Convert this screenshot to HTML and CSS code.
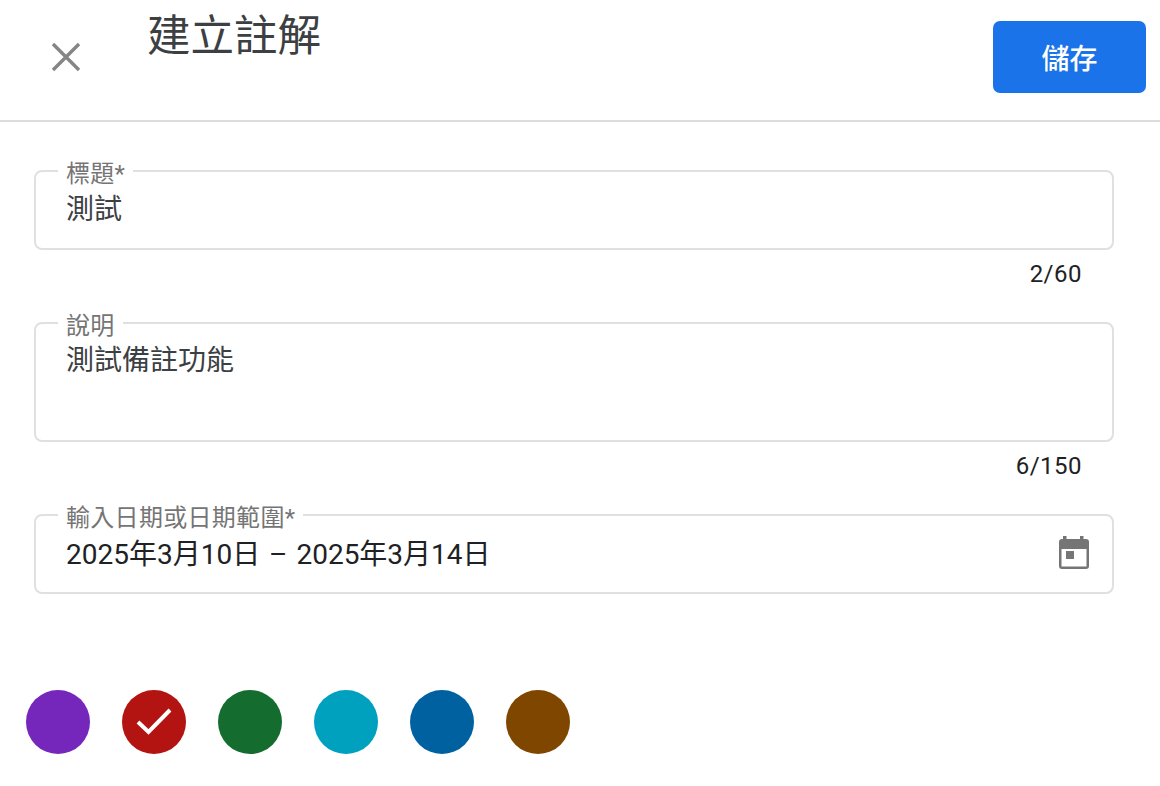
FILE: index.html
```html
<!DOCTYPE html>
<html lang="zh-TW">
<head>
    <meta charset="UTF-8">
    <meta name="viewport" content="width=device-width, initial-scale=1.0">
    <title>建立註解</title>
    <link rel="stylesheet" href="styles.css">
</head>
<body>
    <div class="dialog-header">
        <button class="close-btn" aria-label="關閉">
            <svg viewBox="0 0 30 30" width="30" height="30"><path d="M2 2L28 28M28 2L2 28" fill="none" stroke="#858585" stroke-width="3.4"/></svg>
        </button>
        <h1 class="dialog-title">建立註解</h1>
        <button class="save-btn">儲存</button>
    </div>
    <div class="dialog-body">
        <fieldset class="field field-title">
            <legend>標題*</legend>
            <div class="field-value">測試</div>
        </fieldset>
        <div class="field-count">2/60</div>
        <fieldset class="field field-desc">
            <legend>說明</legend>
            <div class="field-value">測試備註功能</div>
        </fieldset>
        <div class="field-count">6/150</div>
        <fieldset class="field field-date">
            <legend>輸入日期或日期範圍*</legend>
            <div class="field-value">2025年3月10日 – 2025年3月14日</div>
            <svg class="calendar-icon" viewBox="0 0 30 33" width="30" height="33"><path fill-rule="evenodd" fill="#757575" d="M4 0h3.500v3h13.500V0h3.500v3h2.500A3 3 0 0 1 30 6V30A3 3 0 0 1 27 33H3A3 3 0 0 1 0 30V6A3 3 0 0 1 3 3H4zM2.500 13V30.500H27.500V13zM7 15h8v8H7z"/></svg>
        </fieldset>
        <div class="swatches">
            <span class="swatch purple"></span>
            <span class="swatch red">
                <svg viewBox="0 0 36 28" width="36" height="28"><path d="M2 14L12.500 24L34 2" fill="none" stroke="#fff" stroke-width="4"/></svg>
            </span>
            <span class="swatch green"></span>
            <span class="swatch teal"></span>
            <span class="swatch blue"></span>
            <span class="swatch brown"></span>
        </div>
    </div>
</body>
</html>
```

FILE: styles.css
```css
body {
    margin: 0;
    background-color: white;
    color: #3c4043;
    font-family: Roboto, "Noto Sans CJK TC", sans-serif;
}
.dialog-header {
    display: flex;
    align-items: flex-start;
    height: 120px;
    border-bottom: 2px solid #dadce0;
}
.close-btn {
    display: flex;
    margin: 42px 0 0 51px;
    padding: 0;
    border: none;
    background: none;
}
.dialog-title {
    margin: 9px 0 0 66px;
    font-size: 43.5px;
    line-height: 56px;
    font-weight: 400;
    flex-grow: 1;
}
.save-btn {
    width: 153px;
    height: 72px;
    margin: 21px 14px 0 0;
    border: none;
    border-radius: 7px;
    background-color: #1a73e8;
    color: white;
    font-family: inherit;
    font-size: 28px;
    font-weight: 500;
}
.dialog-body {
    padding: 35px 46px 0 34px;
}
.field {
    position: relative;
    box-sizing: border-box;
    min-width: 0;
    margin: 0;
    padding: 0 30px;
    border: 2px solid #e0e0e0;
    border-radius: 8px;
}
.field legend {
    margin-left: -8px;
    padding: 0 8px;
    color: #757575;
    font-size: 24px;
    line-height: 34px;
    height: 28px;
    letter-spacing: 0.3px;
}
.field-title, .field-date {
    height: 93px;
}
.field-desc {
    height: 133px;
}
.field-value {
    font-size: 28px;
    line-height: 36px;
    margin-top: 7px;
    color: #3c4043;
}
.field-date .field-value {
    margin-top: 8px;
    color: #202124;
    word-spacing: 2px;
}
.field-desc .field-value {
    margin-top: 6px;
}
.field-count {
    height: 49px;
    padding: 10px 32px 0 0;
    text-align: right;
    font-size: 24px;
    line-height: 28px;
    letter-spacing: 0.5px;
    color: #202124;
}
.calendar-icon {
    position: absolute;
    right: 23px;
    top: 7px;
}
.swatches {
    display: flex;
    gap: 32px;
    margin: 96px 0 0 -8px;
}
.swatch {
    display: flex;
    align-items: center;
    justify-content: center;
    width: 64px;
    height: 64px;
    border-radius: 50%;
}
.purple { background-color: #7627bb; }
.red { background-color: #b31412; }
.green { background-color: #146c2e; }
.teal { background-color: #00a0bf; }
.blue { background-color: #0061a0; }
.brown { background-color: #7f4600; }
```
